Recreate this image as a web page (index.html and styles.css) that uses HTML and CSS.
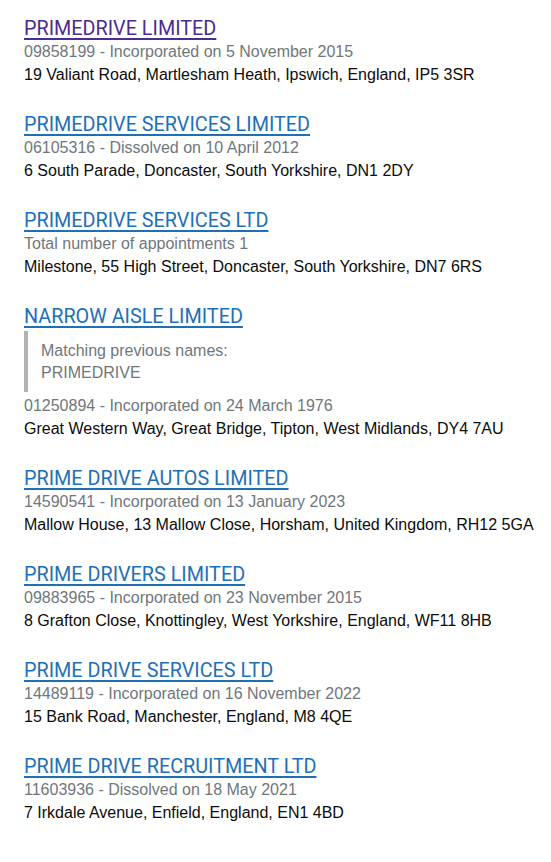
FILE: index.html
```html
<!DOCTYPE html>
<html lang="en">

<head>
	<meta charset="UTF-8">
	<meta name="viewport" content="width=device-width, initial-scale=1.0">
	<title>Search results</title>
	<link rel="stylesheet" href="styles.css">
</head>

<body>
	<ul class="results">
		<li class="result">
			<h3 class="result-title"><a class="result-link visited" href="#">PRIMEDRIVE LIMITED</a></h3>
			<p class="result-meta">09858199 - Incorporated on 5 November 2015</p>
			<p class="result-address">19 Valiant Road, Martlesham Heath, Ipswich, England, IP5 3SR</p>
		</li>
		<li class="result">
			<h3 class="result-title"><a class="result-link" href="#">PRIMEDRIVE SERVICES LIMITED</a></h3>
			<p class="result-meta">06105316 - Dissolved on 10 April 2012</p>
			<p class="result-address">6 South Parade, Doncaster, South Yorkshire, DN1 2DY</p>
		</li>
		<li class="result">
			<h3 class="result-title"><a class="result-link" href="#">PRIMEDRIVE SERVICES LTD</a></h3>
			<p class="result-meta">Total number of appointments 1</p>
			<p class="result-address">Milestone, 55 High Street, Doncaster, South Yorkshire, DN7 6RS</p>
		</li>
		<li class="result">
			<h3 class="result-title"><a class="result-link" href="#">NARROW AISLE LIMITED</a></h3>
			<div class="previous-names">
				<p>Matching previous names:</p>
				<p>PRIMEDRIVE</p>
			</div>
			<p class="result-meta">01250894 - Incorporated on 24 March 1976</p>
			<p class="result-address">Great Western Way, Great Bridge, Tipton, West Midlands, DY4 7AU</p>
		</li>
		<li class="result">
			<h3 class="result-title"><a class="result-link" href="#">PRIME DRIVE AUTOS LIMITED</a></h3>
			<p class="result-meta">14590541 - Incorporated on 13 January 2023</p>
			<p class="result-address">Mallow House, 13 Mallow Close, Horsham, United Kingdom, RH12 5GA</p>
		</li>
		<li class="result">
			<h3 class="result-title"><a class="result-link" href="#">PRIME DRIVERS LIMITED</a></h3>
			<p class="result-meta">09883965 - Incorporated on 23 November 2015</p>
			<p class="result-address">8 Grafton Close, Knottingley, West Yorkshire, England, WF11 8HB</p>
		</li>
		<li class="result">
			<h3 class="result-title"><a class="result-link" href="#">PRIME DRIVE SERVICES LTD</a></h3>
			<p class="result-meta">14489119 - Incorporated on 16 November 2022</p>
			<p class="result-address">15 Bank Road, Manchester, England, M8 4QE</p>
		</li>
		<li class="result">
			<h3 class="result-title"><a class="result-link" href="#">PRIME DRIVE RECRUITMENT LTD</a></h3>
			<p class="result-meta">11603936 - Dissolved on 18 May 2021</p>
			<p class="result-address">7 Irkdale Avenue, Enfield, England, EN1 4BD</p>
		</li>
	</ul>
</body>

</html>
```

FILE: styles.css
```css
body {
	margin: 0;
	background-color: #fff;
	color: #0b0c0c;
	font-family: "Liberation Sans", Arial, sans-serif;
	font-size: 16px;
}

.results {
	list-style: none;
	margin: 0;
	padding: 17px 4px 0 24px;
}

.result {
	margin-bottom: 27px;
}

.result-title {
	margin: 0;
	font-family: Roboto, "Liberation Sans", sans-serif;
	font-size: 19.8px;
	font-weight: normal;
	line-height: 23px;
}

.result-link {
	color: #1d70b8;
	text-decoration: underline;
	text-decoration-thickness: 2px;
	text-underline-offset: 3px;
}

.result-link.visited {
	color: #4c2c92;
}

.result-meta {
	margin: 0;
	color: #6f777b;
	line-height: 23px;
}

.result-address {
	margin: 0;
	line-height: 23px;
}

.previous-names {
	margin: 3px 0 2px;
	padding: 9px 0 8px 13px;
	border-left: 4px solid #b1b4b6;
	color: #6f777b;
}

.previous-names p {
	margin: 0;
	line-height: 22px;
}
```
